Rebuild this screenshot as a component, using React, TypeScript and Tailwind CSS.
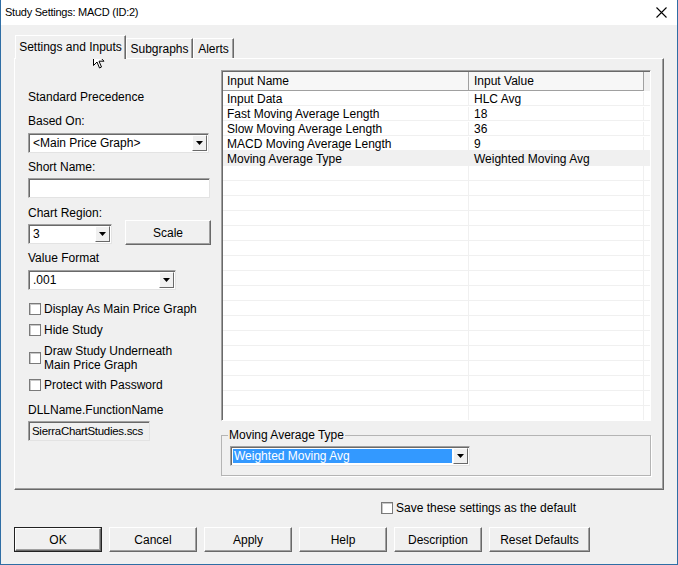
import React from 'react';

const ROWS: { name: string; value: string; active?: boolean }[] = [
  { name: 'Input Data', value: 'HLC Avg' },
  { name: 'Fast Moving Average Length', value: '18' },
  { name: 'Slow Moving Average Length', value: '36' },
  { name: 'MACD Moving Average Length', value: '9' },
  { name: 'Moving Average Type', value: 'Weighted Moving Avg', active: true },
];

const EMPTY_ROWS = 17;

const DropArrow = () => (
  <div className="my-[1px] mr-[1px] flex w-[15px] shrink-0 items-center justify-center border border-t-white border-l-white border-r-[#696969] border-b-[#696969] bg-[#f0f0f0]">
    <svg width="7" height="4" viewBox="0 0 7 4">
      <polygon points="0,0 7,0 3.5,4" fill="#000" />
    </svg>
  </div>
);

const Select = ({ value, className, highlight }: { value: string; className: string; highlight?: boolean }) => (
  <div
    className={`flex h-[20px] items-stretch border border-t-[#a0a0a0] border-l-[#a0a0a0] border-r-[#e3e3e3] border-b-[#e3e3e3] bg-white shadow-[inset_1px_1px_0_#696969] ${className}`}
  >
    {highlight ? (
      <div className="m-[2px] mr-[1px] flex flex-1 items-center bg-[#3399ff] pl-[1px] leading-[14px] text-white">{value}</div>
    ) : (
      <div className="flex flex-1 items-center pl-[4px] leading-[14px]">{value}</div>
    )}
    <DropArrow />
  </div>
);

const TextBox = ({ value = '', className }: { value?: string; className: string }) => (
  <div
    className={`flex h-[20px] items-center overflow-hidden whitespace-nowrap border border-t-[#a0a0a0] border-l-[#a0a0a0] border-r-[#e3e3e3] border-b-[#e3e3e3] pl-[3px] leading-[14px] shadow-[inset_1px_1px_0_#696969] ${className}`}
  >
    {value}
  </div>
);

const Check = ({ children, className = '' }: { children: React.ReactNode; className?: string }) => (
  <div className={`flex items-center gap-[3px] leading-[14px] ${className}`}>
    <div className="ml-[1px] h-[12px] w-[12px] shrink-0 border border-[#7a7a7a] bg-white shadow-[inset_1px_1px_0_#c8c8c8]" />
    <div>{children}</div>
  </div>
);

const Button = ({ label, className = 'w-[88px]', isDefault }: { label: string; className?: string; isDefault?: boolean }) => (
  <div className={`${isDefault ? 'border border-[#222]' : ''}`}>
    <div
      className={`flex items-center justify-center border border-t-white border-l-white border-r-[#696969] border-b-[#696969] bg-[#f0f0f0] shadow-[inset_-1px_-1px_0_#a0a0a0] ${
        isDefault ? 'h-[23px]' : 'h-[25px]'
      } ${className}`}
    >
      {label}
    </div>
  </div>
);

export default function App() {
  return (
    <div className="relative flex h-[565px] w-[678px] flex-col overflow-hidden border-x border-b border-[#2f6ea5] bg-[#f0f0f0] font-['Liberation_Sans',Arial,sans-serif] text-[12px] text-black">
      {/* title bar */}
      <div className="flex h-[25px] shrink-0 items-center justify-between bg-white pl-[4px] pr-[10px]">
        <span className="text-[11px] tracking-[-0.25px]">Study Settings: MACD (ID:2)</span>
        <svg width="11" height="11" viewBox="0 0 11 11">
          <path d="M0.5 0.5 L10.5 10.5 M10.5 0.5 L0.5 10.5" stroke="#000" strokeWidth="1.1" />
        </svg>
      </div>

      {/* tabs */}
      <div className="ml-[14px] mt-[10px] flex h-[23px] items-end">
        <div className="relative z-10 -mb-[1px] flex h-[24px] w-[111px] items-center justify-center border border-b-0 border-t-white border-l-white border-r-[#696969] bg-[#f0f0f0] pb-[2px] shadow-[inset_-1px_0_0_#a0a0a0]">
          Settings and Inputs
        </div>
        <div className="flex h-[20px] w-[67px] items-center justify-center border border-b-0 border-t-white border-l-white border-r-[#696969] shadow-[inset_-1px_0_0_#a0a0a0]">
          Subgraphs
        </div>
        <div className="flex h-[20px] w-[41px] items-center justify-center border border-b-0 border-t-white border-l-white border-r-[#696969] shadow-[inset_-1px_0_0_#a0a0a0]">
          Alerts
        </div>
      </div>

      {/* tab panel */}
      <div className="ml-[13px] flex h-[432px] w-[650px] border border-t-white border-l-white border-r-[#696969] border-b-[#696969] shadow-[inset_-1px_-1px_0_#a0a0a0]">
        {/* left column */}
        <div className="ml-[13px] flex w-[184px] flex-col leading-[14px]">
          <div className="mt-[31px]">Standard Precedence</div>
          <div className="mt-[10px]">Based On:</div>
          <Select value="<Main Price Graph>" className="mt-[5px] w-[181px]" />
          <div className="mt-[7px]">Short Name:</div>
          <TextBox className="mt-[4px] w-[182px] bg-white" />
          <div className="mt-[8px]">Chart Region:</div>
          <div className="flex items-start">
            <Select value="3" className="mt-[4px] w-[84px]" />
            <div className="ml-[13px]">
              <Button label="Scale" className="w-[86px]" />
            </div>
          </div>
          <div className="mt-[6px]">Value Format</div>
          <Select value=".001" className="mt-[5px] w-[148px]" />
          <Check className="mt-[12px]">Display As Main Price Graph</Check>
          <Check className="mt-[7px]">Hide Study</Check>
          <Check className="mt-[7px]">
            Draw Study Underneath
            <br />
            Main Price Graph
          </Check>
          <Check className="mt-[6px]">Protect with Password</Check>
          <div className="mt-[11px]">DLLName.FunctionName</div>
          <TextBox value="SierraChartStudies.scs" className="mt-[4px] w-[122px] bg-[#f0f0f0] text-[11.5px] tracking-[-0.3px]" />
        </div>

        {/* right column */}
        <div className="ml-[9px] flex w-[430px] flex-col pt-[11px]">
          <div className="flex h-[351px] flex-col overflow-hidden border border-t-[#a0a0a0] border-l-[#a0a0a0] border-r-white border-b-white bg-white pl-[1px] pt-[1px] shadow-[inset_1px_1px_0_#696969]">
            <div className="flex h-[19px] shrink-0 bg-[#f0f0f0] leading-[14px]">
              <div className="flex w-[246px] items-center border-r border-b border-[#a0a0a0] bg-[#f7f7f7] pl-[4px]">Input Name</div>
              <div className="flex w-[175px] items-center border-r border-b border-[#a0a0a0] bg-[#f7f7f7] pl-[5px]">Input Value</div>
              <div className="flex-1" />
            </div>
            {ROWS.map((r) => (
              <div key={r.name} className={`flex h-[15px] shrink-0 border-b border-[#f0f0f0] pt-[1px] leading-[14px] ${r.active ? 'bg-[#f0f0f0]' : ''}`}>
                <div className="w-[246px] border-r border-[#f0f0f0] pl-[4px]">{r.name}</div>
                <div className="w-[175px] border-r border-[#f0f0f0] pl-[5px]">{r.value}</div>
                <div className="flex-1" />
              </div>
            ))}
            {Array.from({ length: EMPTY_ROWS }).map((_, i) => (
              <div key={i} className="flex h-[15px] shrink-0 border-b border-[#f0f0f0]">
                <div className="w-[246px] border-r border-[#f0f0f0]" />
                <div className="w-[175px] border-r border-[#f0f0f0]" />
                <div className="flex-1" />
              </div>
            ))}
          </div>

          {/* group box */}
          <div className="relative mt-[14px] h-[41px] border border-[#b4b4b4] pl-[8px] pt-[10px] shadow-[1px_1px_0_white]">
            <span className="absolute -top-[8px] left-[6px] bg-[#f0f0f0] px-[1px] leading-[14px]">Moving Average Type</span>
            <Select value="Weighted Moving Avg" className="w-[240px]" highlight />
          </div>
        </div>
      </div>

      {/* footer */}
      <Check className="ml-[379px] mt-[11px]">Save these settings as the default</Check>
      <div className="ml-[13px] mt-[12px] flex gap-[7px]">
        <Button label="OK" isDefault className="w-[86px]" />
        <Button label="Cancel" />
        <Button label="Apply" />
        <Button label="Help" />
        <Button label="Description" />
        <Button label="Reset Defaults" className="w-[101px]" />
      </div>

      {/* mouse pointer */}
      <svg className="absolute left-[92px] top-[50px]" width="12" height="19" viewBox="0 0 12 19">
        <path d="M0.5 0.5 L0.5 15.5 L4 12 L6.5 18 L8.5 17 L6 11.2 L11 11.2 Z" fill="#fff" stroke="#000" strokeWidth="1" strokeLinejoin="round" />
      </svg>
    </div>
  );
}
